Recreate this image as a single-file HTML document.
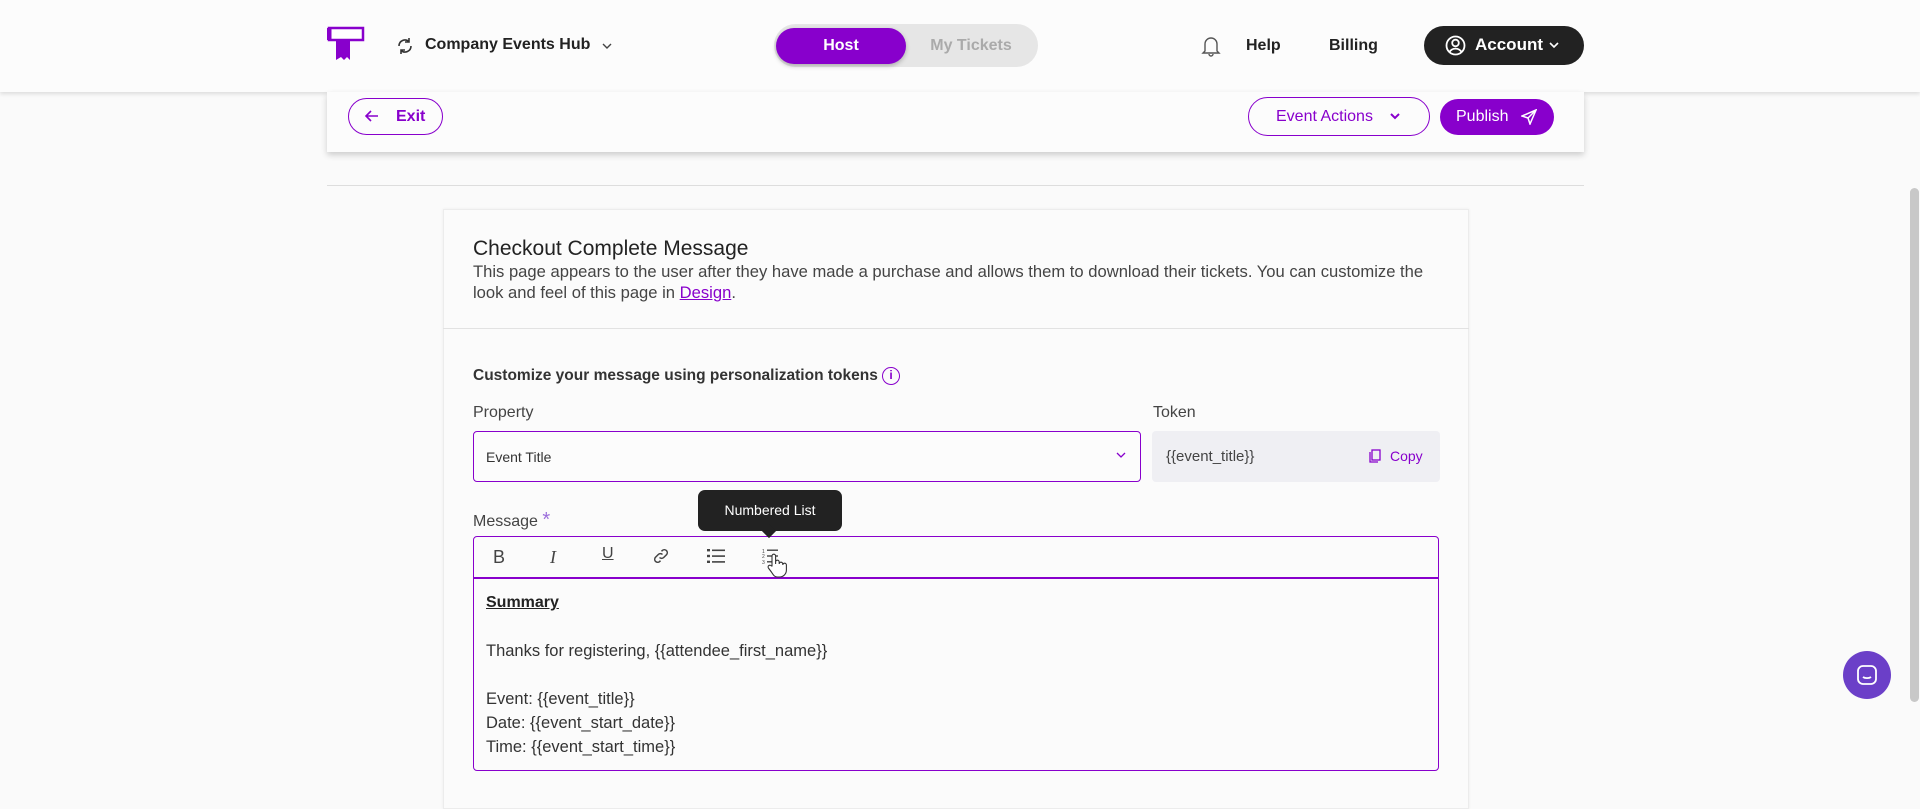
<!DOCTYPE html>
<html><head><meta charset="utf-8"><style>
*{box-sizing:border-box;margin:0;padding:0}
body{width:1920px;height:800px;overflow:hidden;background:#fafafa;font-family:"Liberation Sans",sans-serif;color:#222;position:relative}
.abs{position:absolute}
.nav{left:0;top:0;width:1920px;height:92px;background:#fcfcfc;box-shadow:0 2px 4px rgba(0,0,0,.12)}
.t{position:absolute;white-space:nowrap}
</style></head><body>
<div class="abs nav"></div>
<!-- logo -->
<svg class="abs" style="left:327px;top:26px" width="40" height="36" viewBox="0 0 40 36">
<rect x="2" y="2" width="34" height="12" fill="#fff" stroke="#8800cc" stroke-width="2.5"/>
<path d="M2 2v12" stroke="#8800cc" stroke-width="5"/>
<path d="M9 14h14v20l-3-3-3 3-3-3-5 3z" fill="#8800cc"/>
</svg>
<svg class="abs" style="left:396px;top:37px" width="18" height="18" viewBox="0 0 18 18" fill="none" stroke="#333" stroke-width="1.6"><path d="M3 9a6 6 0 0 1 10-4.5M15 9a6 6 0 0 1-10 4.5M13 1v4h-4M5 17v-4h4"/></svg>
<div class="t" style="left:425px;top:36px;font-size:16px;font-weight:bold;color:#222">Company Events Hub</div>
<svg class="abs" style="left:601px;top:41px" width="12" height="10" viewBox="0 0 12 10" fill="none" stroke="#444" stroke-width="1.4"><path d="M2 3l4 4 4-4"/></svg>
<div class="abs" style="left:774px;top:24px;width:264px;height:43px;border-radius:22px;background:#e6e6e6"></div>
<div class="abs" style="left:776px;top:28px;width:130px;height:36px;border-radius:18px;background:#8800cc;box-shadow:0 2px 5px rgba(0,0,0,.25)"></div>
<div class="t" style="left:776px;top:37px;width:130px;text-align:center;color:#fff;font-size:16px;font-weight:bold">Host</div>
<div class="t" style="left:906px;top:37px;width:130px;text-align:center;color:#aaa;font-size:16px;font-weight:bold">My Tickets</div>
<svg class="abs" style="left:1201px;top:35px" width="20" height="22" viewBox="0 0 20 22" fill="none" stroke="#555" stroke-width="1.4"><path d="M4 16V9a6 6 0 0 1 12 0v7l2 2H2z M8 19a2 2 0 0 0 4 0"/></svg>
<div class="t" style="left:1246px;top:37px;font-size:16px;font-weight:bold">Help</div>
<div class="t" style="left:1329px;top:37px;font-size:16px;font-weight:bold">Billing</div>
<div class="abs" style="left:1424px;top:26px;width:160px;height:39px;border-radius:20px;background:#222"></div>
<svg class="abs" style="left:1445px;top:35px" width="21" height="21" viewBox="0 0 21 21" fill="none" stroke="#fff" stroke-width="1.8"><circle cx="10.5" cy="10.5" r="9"/><circle cx="10.5" cy="8" r="3.3"/><path d="M4.5 17a7 7 0 0 1 12 0"/></svg>
<div class="t" style="left:1475px;top:35px;color:#fff;font-size:17px;font-weight:bold">Account</div>
<svg class="abs" style="left:1549px;top:41px" width="10" height="8" viewBox="0 0 10 8" fill="none" stroke="#fff" stroke-width="1.6"><path d="M1 2l4 4 4-4"/></svg>
<!-- subheader -->
<div class="abs" style="left:327px;top:92px;width:1257px;height:60px;background:#fcfcfc;box-shadow:0 3px 6px rgba(0,0,0,.18)"></div>
<div class="abs" style="left:348px;top:98px;width:95px;height:37px;border:1.5px solid #8800cc;border-radius:19px"></div>
<svg class="abs" style="left:364px;top:108px" width="16" height="16" viewBox="0 0 16 16" fill="none" stroke="#8800cc" stroke-width="1.6"><path d="M14 8H2M7 3L2 8l5 5"/></svg>
<div class="t" style="left:396px;top:108px;color:#8800cc;font-size:16px;font-weight:bold">Exit</div>
<div class="abs" style="left:1248px;top:97px;width:182px;height:39px;border:1.5px solid #8800cc;border-radius:20px"></div>
<div class="t" style="left:1276px;top:108px;color:#8800cc;font-size:16px">Event Actions</div>
<svg class="abs" style="left:1389px;top:111px" width="12" height="10" viewBox="0 0 12 10" fill="none" stroke="#8800cc" stroke-width="2"><path d="M2 3l4 4 4-4"/></svg>
<div class="abs" style="left:1440px;top:99px;width:114px;height:36px;border-radius:18px;background:#8800cc"></div>
<div class="t" style="left:1456px;top:108px;color:#fff;font-size:16px">Publish</div>
<svg class="abs" style="left:1521px;top:109px" width="16" height="16" viewBox="0 0 16 16" fill="none" stroke="#fff" stroke-width="1.5"><path d="M15 1L1 7l6 2 2 6z M15 1L7 9"/></svg>
<div class="abs" style="left:327px;top:185px;width:1257px;height:1px;background:#ddd"></div>
<!-- card -->
<div class="abs" style="left:443px;top:209px;width:1026px;height:600px;background:#fbfbfb;border:1px solid #ececec;box-shadow:0 0 3px rgba(0,0,0,.06)"></div>
<div class="t" style="left:473px;top:237px;font-size:21px;color:#222">Checkout Complete Message</div>
<div class="t" style="left:473px;top:261px;font-size:16.6px;color:#444;line-height:21px">This page appears to the user after they have made a purchase and allows them to download their tickets. You can customize the<br>look and feel of this page in <span style="color:#8800cc;text-decoration:underline">Design</span>.</div>
<div class="abs" style="left:443px;top:328px;width:1026px;height:1px;background:#e2e2e2"></div>
<div class="t" style="left:473px;top:367px;font-size:15.5px;font-weight:bold;color:#333">Customize your message using personalization tokens</div>
<div class="abs" style="left:882px;top:367px;width:18px;height:18px;border:1.5px solid #8800cc;border-radius:50%;color:#8800cc;font-size:12px;font-weight:bold;text-align:center;line-height:15px">i</div>
<div class="t" style="left:473px;top:404px;font-size:16px;color:#444">Property</div>
<div class="t" style="left:1153px;top:404px;font-size:16px;color:#444">Token</div>
<div class="abs" style="left:473px;top:431px;width:668px;height:51px;border:1.5px solid #8800cc;border-radius:4px;background:#fcfcfc"></div>
<div class="t" style="left:486px;top:449px;font-size:14px;color:#333">Event Title</div>
<svg class="abs" style="left:1116px;top:451px" width="10" height="8" viewBox="0 0 10 8" fill="none" stroke="#8800cc" stroke-width="1.3"><path d="M1 2l4 4 4-4"/></svg>
<div class="abs" style="left:1152px;top:431px;width:288px;height:51px;border-radius:4px;background:#efeff3"></div>
<div class="t" style="left:1166px;top:448px;font-size:15px;color:#444">{{event_title}}</div>
<svg class="abs" style="left:1369px;top:449px" width="13" height="14" viewBox="0 0 13 14" fill="none" stroke="#8800cc" stroke-width="1.3"><rect x="3" y="1" width="8" height="10"/><path d="M1 3v10h8"/></svg>
<div class="t" style="left:1390px;top:448px;font-size:14px;color:#8800cc">Copy</div>
<div class="t" style="left:473px;top:509px;font-size:16px;color:#444">Message <span style="color:#9b6ddb;font-size:20px">*</span></div>
<div class="abs" style="left:473px;top:536px;width:966px;height:235px;border:1.5px solid #8800cc;border-radius:4px;background:#fbfbfb"></div>
<div class="abs" style="left:474px;top:577px;width:964px;height:1.5px;background:#8800cc"></div>
<div class="t" style="left:493px;top:547px;font-size:18px;color:#444">B</div>
<div class="t" style="left:550px;top:547px;font-size:18px;color:#444;font-family:'Liberation Serif',serif;font-style:italic">I</div>
<div class="t" style="left:602px;top:545px;font-size:16px;color:#444;text-decoration:underline">U</div>
<svg class="abs" style="left:652px;top:547px" width="18" height="18" viewBox="0 0 18 18" fill="none" stroke="#444" stroke-width="1.5"><path d="M7.5 10.5a3 3 0 0 0 4.2 0l3-3a3 3 0 0 0-4.2-4.2l-1 1M10.5 7.5a3 3 0 0 0-4.2 0l-3 3a3 3 0 0 0 4.2 4.2l1-1"/></svg>
<svg class="abs" style="left:707px;top:548px" width="18" height="16" viewBox="0 0 18 16" fill="#444"><rect x="0" y="1" width="3" height="2.4"/><rect x="5" y="1.5" width="13" height="1.6"/><rect x="0" y="6.8" width="3" height="2.4"/><rect x="5" y="7.3" width="13" height="1.6"/><rect x="0" y="12.6" width="3" height="2.4"/><rect x="5" y="13.1" width="13" height="1.6"/></svg>
<svg class="abs" style="left:762px;top:548px" width="16" height="16" viewBox="0 0 16 16" fill="#444"><rect x="5" y="1.5" width="11" height="1.4"/><rect x="5" y="7.3" width="11" height="1.4"/><rect x="5" y="13.1" width="11" height="1.4"/><text x="0" y="5" font-size="5" font-family="Liberation Sans">1</text><text x="0" y="10" font-size="5" font-family="Liberation Sans">2</text><text x="0" y="16" font-size="5" font-family="Liberation Sans">3</text></svg>
<svg class="abs" style="left:766px;top:553px" width="24" height="26" viewBox="0 0 24 26" fill="#fff" stroke="#333" stroke-width="1.1"><path d="M6 13V3a1.8 1.8 0 0 1 3.6 0v8V9a1.8 1.8 0 0 1 3.6 0v2a1.8 1.8 0 0 1 3.6 0v1a1.8 1.8 0 0 1 3.6 0v5c0 4-3 7-7 7h-2c-3 0-4-2-6-5l-3-4a1.8 1.8 0 0 1 3-2z"/></svg>
<div class="abs" style="left:698px;top:490px;width:144px;height:41px;border-radius:7px;background:#222"></div>
<div class="abs" style="left:764px;top:526px;width:10px;height:10px;background:#222;transform:rotate(45deg)"></div>
<div class="t" style="left:698px;top:502px;width:144px;text-align:center;color:#fff;font-size:14px">Numbered List</div>
<div class="t" style="left:486px;top:594px;font-size:16px;font-weight:bold;color:#222;text-decoration:underline">Summary</div>
<div class="t" style="left:486px;top:642px;font-size:16.5px;color:#333">Thanks for registering, {{attendee_first_name}}</div>
<div class="t" style="left:486px;top:687px;font-size:16.5px;color:#333;line-height:24px">Event: {{event_title}}<br>Date: {{event_start_date}}<br>Time: {{event_start_time}}</div>
<!-- chat + scrollbar -->
<div class="abs" style="left:1843px;top:651px;width:48px;height:48px;border-radius:50%;background:#6b3fc8"></div>
<svg class="abs" style="left:1856px;top:664px" width="22" height="22" viewBox="0 0 22 22" fill="none" stroke="#fff" stroke-width="1.8"><rect x="2" y="2" width="18" height="18" rx="5"/><path d="M7 13c2 1.5 6 1.5 8 0"/></svg>
<div class="abs" style="left:1910px;top:188px;width:9px;height:514px;border-radius:5px;background:#c8c8c8"></div>
</body></html>
